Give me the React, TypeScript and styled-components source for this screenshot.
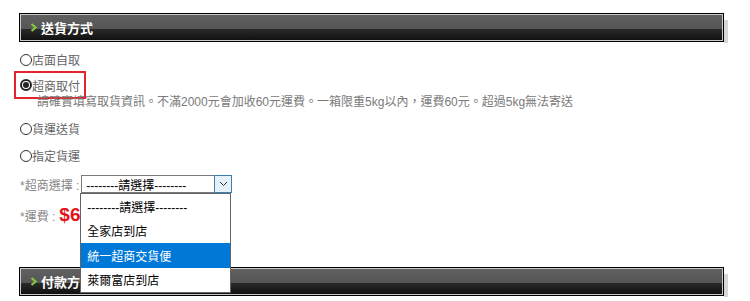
import React from "react";
import styled, { createGlobalStyle } from "styled-components";

const GlobalStyle = createGlobalStyle`
  html, body { margin: 0; padding: 0; background: #fff; }
  body {
    font-family: "Liberation Sans", "Noto Sans CJK TC", Arial, sans-serif;
    font-size: 12px;
    color: #666;
  }
`;

const Page = styled.div`
  width: 750px;
  height: 301px;
  overflow: hidden;
  padding-top: 13px;
  box-sizing: border-box;
`;

const SectionHeader = styled.div<{ $mt?: number }>`
  position: relative;
  margin-left: 19px;
  margin-top: ${(p) => p.$mt ?? 0}px;
  width: 705px;
  height: 29px;
  box-sizing: border-box;
  border: 1px solid #000;
  box-shadow: inset 0 0 0 1px #c9c9c9;
  background: linear-gradient(
    to bottom,
    #c9c9c9 0,
    #c9c9c9 1px,
    #606060 1px,
    #565656 15px,
    #2a2a2a 15px,
    #111 26px,
    #c9c9c9 26px
  );
  display: flex;
  align-items: center;
  padding-left: 10px;
  gap: 4px;
  color: #fff;
  font-weight: bold;
  font-size: 13px;
  &::after {
    content: "";
    position: absolute;
    left: calc(100% + 1px);
    top: 6px;
    bottom: -2px;
    width: 4px;
    background: #d6d6d6;
  }
`;

const Chevron = () => (
  <svg width="7" height="9" viewBox="0 0 7 9">
    <polyline points="1.5,1 5.5,4.5 1.5,8" fill="none" stroke="#86c440" strokeWidth="2.2" />
  </svg>
);

const Options = styled.div`
  padding-left: 20px;
  margin-top: 6px;
  display: flex;
  flex-direction: column;
`;

const RadioRow = styled.label<{ $h: number; $selected?: boolean }>`
  display: flex;
  align-items: center;
  height: ${(p) => p.$h}px;
  color: #666;
  font-size: 12px;
  ${(p) =>
    p.$selected
      ? `
    align-self: flex-start;
    border: 2px solid #e1252b;
    margin-left: -6px;
    padding: 0 4px;
    box-sizing: border-box;
  `
      : ""}
`;

const RadioDot = styled.span<{ $checked?: boolean }>`
  width: 12px;
  height: 12px;
  box-sizing: border-box;
  border-radius: 50%;
  border: ${(p) => (p.$checked ? "2px solid #222" : "1px solid #333")};
  background: #fff;
  display: flex;
  align-items: center;
  justify-content: center;
  flex: none;
  &::after {
    content: "";
    display: ${(p) => (p.$checked ? "block" : "none")};
    width: 6px;
    height: 6px;
    border-radius: 50%;
    background: #222;
  }
`;

const Note = styled.div`
  padding-left: 17px;
  margin-top: -3px;
  margin-bottom: 6px;
  line-height: 13px;
  color: #7a7a7a;
  font-size: 12px;
`;

const FieldRow = styled.div<{ $h: number; $mt?: number }>`
  display: flex;
  align-items: center;
  height: ${(p) => p.$h}px;
  margin-top: ${(p) => p.$mt ?? 0}px;
  color: #888;
  font-size: 12px;
`;

const FieldLabel = styled.span`
  white-space: pre;
`;

const SelectWrap = styled.div`
  position: relative;
  margin-left: 2px;
`;

const SelectBox = styled.div`
  width: 151px;
  height: 18px;
  box-sizing: border-box;
  border: 1px solid #7a7a7a;
  background: #fff;
  display: flex;
  align-items: center;
  padding-left: 4px;
  color: #000;
  font-size: 12px;
  position: relative;
`;

const ArrowBtn = styled.span`
  position: absolute;
  right: -1px;
  top: -1px;
  width: 18px;
  height: 18px;
  box-sizing: border-box;
  border: 1px solid #3c7fb1;
  background: #e5f1fb;
  display: flex;
  align-items: center;
  justify-content: center;
`;

const Dropdown = styled.div`
  position: absolute;
  z-index: 5;
  left: -1px;
  top: 18px;
  width: 151px;
  box-sizing: border-box;
  border: 1px solid #646464;
  background: #fff;
`;

const Option = styled.div<{ $active?: boolean }>`
  height: 24.5px;
  display: flex;
  align-items: center;
  padding-left: 6px;
  font-size: 12px;
  color: ${(p) => (p.$active ? "#fff" : "#000")};
  background: ${(p) => (p.$active ? "#0078d7" : "#fff")};
`;

const Price = styled.span`
  margin-left: 4px;
  color: #e3141b;
  font-size: 19px;
  font-weight: bold;
  font-family: "Liberation Sans", Arial, sans-serif;
`;

export default function App() {
  return (
    <>
      <GlobalStyle />
      <Page>
        <SectionHeader>
          <Chevron />
          <span>送貨方式</span>
        </SectionHeader>
        <Options>
          <RadioRow $h={23}>
            <RadioDot />
            店面自取
          </RadioRow>
          <RadioRow $h={28} $selected>
            <RadioDot $checked />
            超商取付
          </RadioRow>
          <Note>請確實填寫取貨資訊。不滿2000元會加收60元運費。一箱限重5kg以內，運費60元。超過5kg無法寄送</Note>
          <RadioRow $h={27}>
            <RadioDot />
            貨運送貨
          </RadioRow>
          <RadioRow $h={27}>
            <RadioDot />
            指定貨運
          </RadioRow>
          <FieldRow $h={18} $mt={6}>
            <FieldLabel>*超商選擇 :</FieldLabel>
            <SelectWrap>
              <SelectBox>
                --------請選擇--------
                <ArrowBtn>
                  <svg width="9" height="6" viewBox="0 0 9 6">
                    <polyline points="1,1 4.5,4.5 8,1" fill="none" stroke="#333" strokeWidth="1" />
                  </svg>
                </ArrowBtn>
              </SelectBox>
              <Dropdown>
                <Option>--------請選擇--------</Option>
                <Option>全家店到店</Option>
                <Option $active>統一超商交貨便</Option>
                <Option>萊爾富店到店</Option>
              </Dropdown>
            </SelectWrap>
          </FieldRow>
          <FieldRow $h={24} $mt={10}>
            <FieldLabel>*運費 :</FieldLabel>
            <Price>$60</Price>
          </FieldRow>
        </Options>
        <SectionHeader $mt={40}>
          <Chevron />
          <span>付款方式</span>
        </SectionHeader>
      </Page>
    </>
  );
}
